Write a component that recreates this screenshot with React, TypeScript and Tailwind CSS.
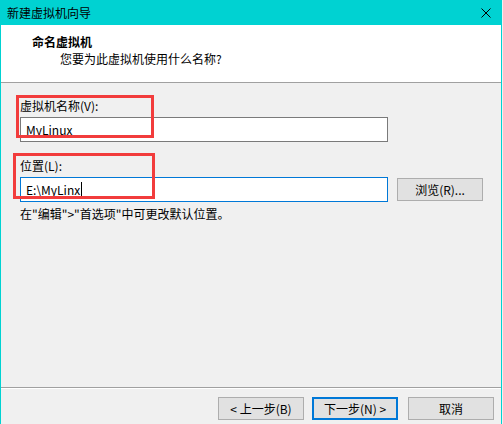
import React from "react";

const font = "font-['Noto_Sans_CJK_SC','Noto_Sans_CJK_JP',sans-serif]";

function WinButton({ children, primary }: { children: React.ReactNode; primary?: boolean }) {
  return (
    <button
      className={
        "flex h-[23px] w-[86px] items-center justify-center bg-[#e1e1e1] text-[12px] leading-4 text-black " +
        (primary ? "border-2 border-[#0078d7]" : "border border-[#adadad]")
      }
    >
      {children}
    </button>
  );
}

export default function App() {
  return (
    <div className={`relative h-[424px] w-[503px] overflow-hidden bg-[#f0f0f0] ${font}`}>
      <div className="flex h-[424px] w-[502px] flex-col">
        {/* title bar */}
        <div className="flex h-[25px] shrink-0 items-center justify-between bg-[#00d2d2] pl-[7px] pr-[11px]">
          <span className="text-[12px] leading-4 text-black">新建虚拟机向导</span>
          <svg width="10" height="10" viewBox="0 0 10 10" className="mr-[0px]">
            <path d="M0.5 0.5 L9.5 9.5 M9.5 0.5 L0.5 9.5" stroke="#000" strokeWidth="1" />
          </svg>
        </div>

        <div className="flex flex-1 flex-col border-x border-[#00d2d2]">
          {/* header */}
          <div className="h-[58px] shrink-0 border-b border-[#a0a0a0] bg-white pt-[9px]">
            <p className="pl-[31px] text-[12px] font-bold leading-4 text-black">命名虚拟机</p>
            <p className="mt-[1px] pl-[59px] text-[12px] leading-4 text-black">您要为此虚拟机使用什么名称?</p>
          </div>

          {/* body */}
          <div className="flex flex-1 flex-col pl-[19px] pt-[15px] text-[12px] leading-4 text-black">
            <label className="mb-[3px]">虚拟机名称(V):</label>
            <div className="flex h-[25px] w-[368px] items-center border border-[#7a7a7a] bg-white pl-[5px]">
              MyLinux
            </div>

            <label className="mb-[3px] mt-[16px]">位置(L):</label>
            <div className="flex items-center gap-[9px]">
              <div className="flex h-[25px] w-[368px] items-center border border-[#0078d7] bg-white pl-[5px]">
                E:\MyLinx
                <span className="ml-[1px] inline-block h-[15px] w-px bg-black" />
              </div>
              <button className="flex h-[23px] w-[86px] items-center justify-center border border-[#adadad] bg-[#e1e1e1]">
                浏览(R)...
              </button>
            </div>

            <p className="mt-[4px]">在"编辑"&gt;"首选项"中可更改默认位置。</p>
          </div>

          {/* footer */}
          <div className="flex h-[37px] shrink-0 justify-end gap-[8px] border-t border-[#a0a0a0] pr-[7px] pt-[9px] shadow-[inset_0_1px_0_#ffffff]">
            <WinButton>&lt; 上一步(B)</WinButton>
            <div className="flex gap-[10px]">
              <WinButton primary>下一步(N) &gt;</WinButton>
              <WinButton>取消</WinButton>
            </div>
          </div>
        </div>
      </div>

      {/* red annotation boxes */}
      <div className="pointer-events-none absolute left-[16px] top-[95px] h-[43px] w-[138px] border-[3px] border-[#f23c3c]" />
      <div className="pointer-events-none absolute left-[13px] top-[153px] h-[46px] w-[142px] border-[3px] border-[#f23c3c]" />
    </div>
  );
}
